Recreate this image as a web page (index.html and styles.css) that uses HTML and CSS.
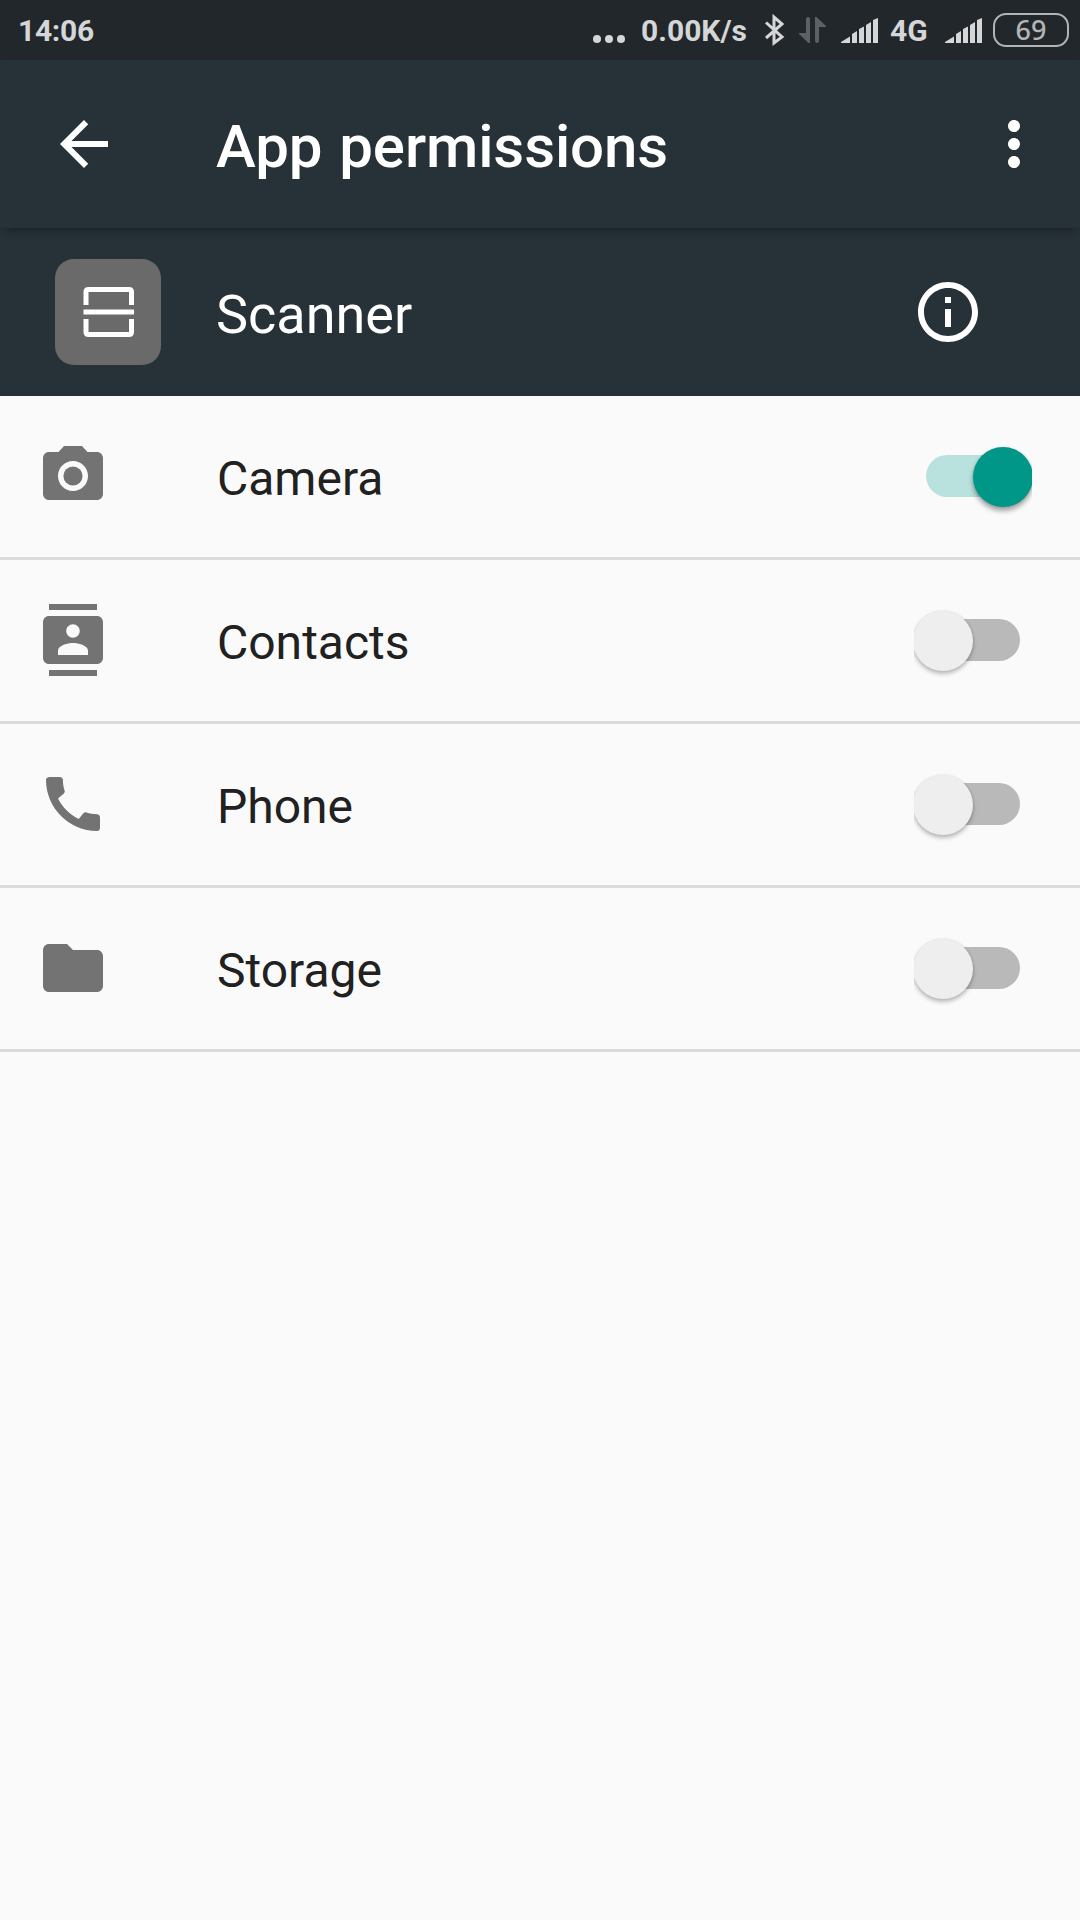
FILE: index.html
```
<!DOCTYPE html>
<html lang="en">
<head>
<meta charset="UTF-8">
<meta name="viewport" content="width=device-width, initial-scale=1.0">
<title>App permissions</title>
<link rel="stylesheet" href="styles.css">
</head>
<body>
<div class="status-bar">
  <span class="clock">14:06</span>
  <svg class="dots" width="32" height="60" viewBox="0 0 32 60">
    <circle cx="4" cy="39" r="4"/>
    <circle cx="16" cy="39" r="4"/>
    <circle cx="28" cy="39" r="4"/>
  </svg>
  <span class="speed">0.00K/s</span>
  <svg class="bluetooth" width="22" height="60" viewBox="0 0 22 60">
    <path d="M2 22.500L18 37L10 43V17L18 24L2 38"/>
  </svg>
  <svg class="data-arrows" width="28" height="60" viewBox="0 0 28 60">
    <path d="M7 19q0-2 2-2t2 2V43H9.500L0 34V33H7zM16 17H17.500L27 26V27H20V41q0 2-2 2t-2-2z"/>
  </svg>
  <svg class="signal" width="38" height="60" viewBox="0 0 38 60">
    <path d="M0 43V42L9 36.500V43zM11 43V34L16 31V43zM18 43V29L23 26.500V43zM25 43V25L30 22V43zM32 43V20L37 18V43z"/>
  </svg>
  <span class="network">4G</span>
  <svg class="signal" width="38" height="60" viewBox="0 0 38 60">
    <path d="M0 43V42L9 36.500V43zM11 43V34L16 31V43zM18 43V29L23 26.500V43zM25 43V25L30 22V43zM32 43V20L37 18V43z"/>
  </svg>
  <span class="battery">69</span>
</div>

<header class="toolbar">
  <svg class="icon back" viewBox="0 0 24 24">
    <path d="M20 11H7.830l5.590-5.590L12 4l-8 8 8 8 1.410-1.410L7.830 13H20v-2z"/>
  </svg>
  <h1>App permissions</h1>
  <svg class="icon" viewBox="0 0 24 24">
    <path d="M12 8c1.100 0 2-.9 2-2s-.9-2-2-2-2 .9-2 2 .9 2 2 2zm0 2c-1.100 0-2 .9-2 2s.9 2 2 2 2-.9 2-2-.9-2-2-2zm0 6c-1.100 0-2 .9-2 2s.9 2 2 2 2-.9 2-2-.9-2-2-2z"/>
  </svg>
</header>

<section class="app-header">
  <div class="app-icon">
    <svg width="106" height="106" viewBox="0 0 106 106">
      <path d="M31 46V33q0-2.500 2.500-2.500H74q2.500 0 2.500 2.500V46M28.500 53H79M31 60V73q0 2.500 2.500 2.500H74q2.500 0 2.500-2.500V60"/>
    </svg>
  </div>
  <h2>Scanner</h2>
  <svg class="icon" viewBox="0 0 24 24">
    <path d="M11 17h2v-6h-2v6zm1-15C6.480 2 2 6.480 2 12s4.480 10 10 10 10-4.480 10-10S17.520 2 12 2zm0 18c-4.410 0-8-3.590-8-8s3.590-8 8-8 8 3.590 8 8-3.590 8-8 8zM11 9h2V7h-2v2z"/>
  </svg>
</section>

<ul class="permissions">
  <li>
    <svg class="icon" viewBox="0 0 24 24">
      <circle cx="12" cy="12" r="3.200"/>
      <path d="M9 2L7.170 4H4c-1.100 0-2 .9-2 2v12c0 1.100.9 2 2 2h16c1.100 0 2-.9 2-2V6c0-1.100-.9-2-2-2h-3.170L15 2H9zm3 15c-2.760 0-5-2.240-5-5s2.240-5 5-5 5 2.240 5 5-2.240 5-5 5z"/>
    </svg>
    <span class="label">Camera</span>
    <span class="switch on"><span class="thumb"></span></span>
  </li>
  <li>
    <svg class="icon" viewBox="0 0 24 24">
      <path d="M20 0H4v2h16V0zM4 24h16v-2H4v2zM20 4H4c-1.100 0-2 .9-2 2v12c0 1.100.9 2 2 2h16c1.100 0 2-.9 2-2V6c0-1.100-.9-2-2-2zm-8 2.750c1.240 0 2.250 1.010 2.250 2.250s-1.010 2.250-2.250 2.250S9.750 10.240 9.750 9 10.760 6.750 12 6.750zM17 17H7v-1.500c0-1.670 3.330-2.500 5-2.500s5 .83 5 2.500V17z"/>
    </svg>
    <span class="label">Contacts</span>
    <span class="switch"><span class="thumb"></span></span>
  </li>
  <li>
    <svg class="icon" viewBox="0 0 24 24">
      <path d="M20.010 15.380c-1.230 0-2.420-.2-3.530-.56-.35-.12-.74-.03-1.010.24l-1.570 1.970c-2.830-1.350-5.480-3.900-6.890-6.830l1.950-1.660c.27-.28.35-.67.24-1.020-.37-1.110-.56-2.300-.56-3.530 0-.54-.45-.99-.99-.99H4.190C3.650 3 3 3.240 3 3.990 3 13.280 10.730 21 20.010 21c.71 0 .99-.63.99-1.180v-3.450c0-.54-.45-.99-.99-.99z"/>
    </svg>
    <span class="label">Phone</span>
    <span class="switch"><span class="thumb"></span></span>
  </li>
  <li>
    <svg class="icon" viewBox="0 0 24 24">
      <path d="M10 4H4c-1.100 0-1.990.9-1.990 2L2 18c0 1.100.9 2 2 2h16c1.100 0 2-.9 2-2V8c0-1.100-.9-2-2-2h-8l-2-2z"/>
    </svg>
    <span class="label">Storage</span>
    <span class="switch"><span class="thumb"></span></span>
  </li>
</ul>
</body>
</html>
```

FILE: styles.css
```
* {
  box-sizing: border-box;
}
body {
  margin: 0;
  min-height: 100vh;
  background-color: #fafafa;
  color: #212121;
  font-family: Roboto, sans-serif;
}
h1, h2, ul {
  margin: 0;
  padding: 0;
}
.icon {
  flex: none;
  width: 72px;
  height: 72px;
  fill: currentColor;
}

/* status bar */
.status-bar {
  display: flex;
  align-items: center;
  height: 60px;
  padding: 0 11px 0 18px;
  background-color: #22272b;
  color: #d5d6d8;
  fill: #d5d6d8;
  font-size: 30px;
  font-weight: 700;
  line-height: 60px;
}
.status-bar span,
.status-bar svg {
  flex: none;
}
.clock,
.speed,
.network {
  padding-top: 1px;
}
.clock {
  margin-right: auto;
  letter-spacing: -0.3px;
}
.speed {
  width: 108px;
  margin-left: 16px;
}
.bluetooth {
  margin-left: 15px;
  fill: none;
  stroke: #d5d6d8;
  stroke-width: 3;
}
.data-arrows {
  margin-left: 13px;
  fill: #5d6164;
}
.signal {
  margin-left: 14px;
}
.network {
  width: 40px;
  margin-left: 11px;
}
.network + .signal {
  margin-left: 15px;
}
.battery {
  width: 76px;
  height: 34px;
  margin-left: 10px;
  border: 2px solid #b2b4b5;
  border-radius: 13px;
  color: #b2b4b5;
  font-family: "Noto Sans", sans-serif;
  font-size: 27px;
  font-weight: 500;
  line-height: 30px;
  text-align: center;
}

/* toolbar */
.toolbar {
  position: relative;
  display: flex;
  align-items: center;
  height: 168px;
  padding: 0 30px 0 48px;
  background-color: #273238;
  color: #fff;
  box-shadow: 0 6px 10px -4px rgba(0, 0, 0, 0.4);
}
.toolbar h1 {
  flex: 1;
  margin-left: 96px;
  padding-top: 4px;
  font-size: 60px;
  font-weight: 500;
  letter-spacing: -0.1px;
  word-spacing: 2px;
}

/* app name */
.app-header {
  display: flex;
  align-items: center;
  height: 168px;
  padding: 0 96px 0 55px;
  background-color: #273238;
  color: #fff;
}
.app-icon {
  width: 106px;
  height: 106px;
  border-radius: 19px;
  background-color: #6a6a6a;
}
.app-icon svg {
  display: block;
  fill: none;
  stroke: #fff;
  stroke-width: 5;
}
.app-header h2 {
  flex: 1;
  margin-left: 55px;
  padding-top: 4px;
  font-size: 54px;
  font-weight: 400;
}

/* permission list */
.permissions {
  list-style: none;
}
.permissions li {
  display: flex;
  align-items: center;
  height: 164px;
  padding: 0 48px 1px 37px;
  border-bottom: 3px solid #dbdbdb;
}
.permissions .icon {
  color: #737373;
}
.label {
  flex: 1;
  margin-left: 108px;
  padding-top: 4px;
  font-size: 48px;
}
.switch {
  position: relative;
  width: 118px;
  height: 82px;
  overflow: hidden;
}
.switch::before {
  content: "";
  display: block;
  width: 94px;
  height: 42px;
  margin: 20px 12px;
  border-radius: 21px;
  background-color: #b9b9b9;
}
.thumb {
  position: absolute;
  top: 12px;
  left: -1px;
  width: 60px;
  height: 60px;
  border-radius: 50%;
  background-color: #eee;
  box-shadow: 0 3px 4px rgba(0, 0, 0, 0.25), 0 0 3px rgba(0, 0, 0, 0.1);
}
.switch.on::before {
  background-color: #b9e1dd;
}
.switch.on .thumb {
  left: 59px;
  background-color: #009688;
  box-shadow: 0 4px 5px rgba(0, 0, 0, 0.35), 0 0 3px rgba(0, 0, 0, 0.1);
}
```
